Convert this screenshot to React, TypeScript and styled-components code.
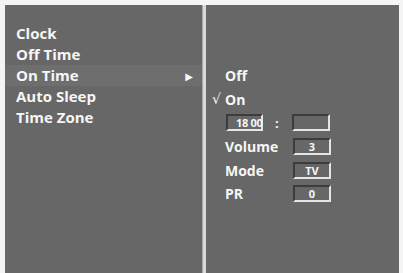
import React from "react";
import styled, { createGlobalStyle } from "styled-components";

const Global = createGlobalStyle`
  html, body { margin: 0; padding: 0; background: #f4f4f4; }
  #root { width: 403px; height: 273px; }
`;

const Frame = styled.div`
  width: 403px;
  height: 273px;
  box-sizing: border-box;
  padding: 5px 4px 0 5px;
  background: #f4f4f4;
  display: flex;
  font-family: "Open Sans", "DejaVu Sans", sans-serif;
  font-weight: 700;
  color: #f6f6f6;
`;

const LeftPanel = styled.div`
  width: 197px;
  background: #676767;
  padding-top: 18px;
  box-sizing: border-box;
  display: flex;
  flex-direction: column;
`;

const Divider = styled.div`
  width: 4px;
  background: #d9d9d9;
  border-left: 1px solid #a8a8a8;
  box-sizing: border-box;
`;

const RightPanel = styled.div`
  flex: 1;
  background: #676767;
  padding-top: 59px;
  padding-left: 6px;
  box-sizing: border-box;
  display: flex;
  flex-direction: column;
`;

const MenuItem = styled.div<{ $active?: boolean }>`
  height: 21px;
  line-height: 21px;
  font-size: 15px;
  padding-left: 11px;
  padding-right: 9px;
  display: flex;
  align-items: center;
  justify-content: space-between;
  background: ${(p) => (p.$active ? "#6e6e6e" : "transparent")};
`;

const Arrow = styled.span`
  font-size: 10px;
  line-height: 1;
`;

const Row = styled.div`
  height: 23.6px;
  display: flex;
  align-items: center;
  font-size: 14px;
`;

const Mark = styled.span`
  width: 13px;
  font-size: 14px;
  font-family: "DejaVu Sans", sans-serif;
  font-weight: 400;
`;

const Label = styled.span`
  width: 68px;
`;

const Field = styled.div<{ $w?: number }>`
  width: ${(p) => p.$w ?? 38}px;
  height: 17px;
  box-sizing: border-box;
  border-top: 2px solid #3c3c3c;
  border-left: 2px solid #3c3c3c;
  border-bottom: 2px solid #e4e4e4;
  border-right: 2px solid #e4e4e4;
  display: flex;
  align-items: center;
  justify-content: center;
  font-size: 11px;
  line-height: 1;
`;

const TimeRow = styled(Row)`
  padding-left: 1px;
`;

const TimeText = styled.span`
  padding-left: 8px;
  font-size: 11px;
  letter-spacing: -0.3px;
`;

const Colon = styled.span`
  width: 29px;
  padding-left: 12px;
  box-sizing: border-box;
  font-size: 13px;
`;

const TimeField = styled(Field)`
  justify-content: flex-start;
  overflow: visible;
  white-space: nowrap;
`;

export default function App() {
  return (
    <>
      <Global />
      <Frame>
        <LeftPanel>
          <MenuItem>Clock</MenuItem>
          <MenuItem>Off Time</MenuItem>
          <MenuItem $active>
            On Time <Arrow>▶</Arrow>
          </MenuItem>
          <MenuItem>Auto Sleep</MenuItem>
          <MenuItem>Time Zone</MenuItem>
        </LeftPanel>
        <Divider />
        <RightPanel>
          <Row>
            <Mark />
            Off
          </Row>
          <Row>
            <Mark>√</Mark>
            On
          </Row>
          <TimeRow>
            <Mark />
            <TimeField $w={37}>
              <TimeText>18 00</TimeText>
            </TimeField>
            <Colon>:</Colon>
            <Field />
          </TimeRow>
          <Row>
            <Mark />
            <Label>Volume</Label>
            <Field>3</Field>
          </Row>
          <Row>
            <Mark />
            <Label>Mode</Label>
            <Field>TV</Field>
          </Row>
          <Row>
            <Mark />
            <Label>PR</Label>
            <Field>0</Field>
          </Row>
        </RightPanel>
      </Frame>
    </>
  );
}
